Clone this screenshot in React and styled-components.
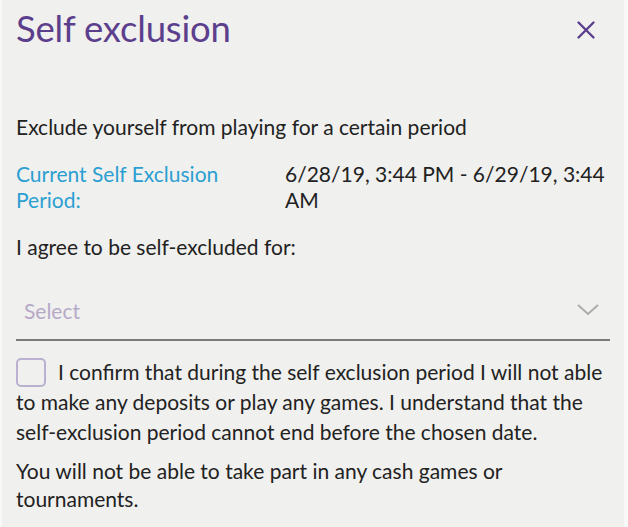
import styled, { createGlobalStyle } from "styled-components"

const Global = createGlobalStyle`
    body{
        margin: 0;
        background: #f0f0ee;
        font-family: "Lato", "Open Sans", sans-serif;
    }
`

export default function App(){
    return(
        <>
            <Global/>
            <Panel>
                <Header>
                    <Title>Self exclusion</Title>
                    <Close aria-label="close">
                        <svg width="20" height="20" viewBox="0 0 20 20">
                            <path d="M2.5 2.5 L17.5 17.5 M17.5 2.5 L2.5 17.5" stroke="#5c3f8c" strokeWidth="2.4" strokeLinecap="round"/>
                        </svg>
                    </Close>
                </Header>

                <Text $top={59}>Exclude yourself from playing for a certain period</Text>

                <Period>
                    <Label>Current Self Exclusion Period:</Label>
                    <Value>6/28/19, 3:44 PM - 6/29/19, 3:44 AM</Value>
                </Period>

                <Text $top={22}>I agree to be self-excluded for:</Text>

                <Select>
                    <span>Select</span>
                    <svg width="24" height="14" viewBox="0 0 24 14">
                        <path d="M2 2 L12 11 L22 2" fill="none" stroke="#ababab" strokeWidth="2"/>
                    </svg>
                </Select>

                <Confirm>
                    <Box/>
                    I confirm that during the self exclusion period I will not able to make any deposits or play any games. I understand that the self-exclusion period cannot end before the chosen date.
                </Confirm>

                <Text $top={10} $lh={28}>You will not be able to take part in any cash games or tournaments.</Text>
            </Panel>
        </>
    )
}

const Panel = styled.div`
    box-sizing: border-box;
    width: 628px;
    height: 527px;
    padding: 0 14px 0 14px;
    border-right: 4px solid #f8f8f8;
    border-left: 2px solid #f8f8f8;
    overflow: hidden;
    color: #222;
`

const Header = styled.header`
    display: flex;
    justify-content: space-between;
    align-items: center;
    height: 56px;
`

const Title = styled.h1`
    margin: 0;
    font-size: 36.5px;
    font-weight: 400;
    color: #5c3f8c;
    letter-spacing: -0.2px;
`

const Close = styled.button`
    border: none;
    background: none;
    padding: 0;
    margin-right: 14px;
    margin-top: 4px;
    display: flex;
`

const Text = styled.p`
    margin: ${p => p.$top}px 0 0;
    font-size: 21px;
    line-height: ${p => p.$lh || 24}px;
    max-width: 600px;
`

const Period = styled.div`
    display: grid;
    grid-template-columns: 269px 1fr;
    margin-top: 22px;
    font-size: 21px;
    line-height: 26px;
`

const Label = styled.div`
    color: #2b9fd2;
    width: 240px;
`

const Value = styled.div`
    width: 326px;
`

const Select = styled.div`
    box-sizing: border-box;
    display: flex;
    justify-content: space-between;
    align-items: center;
    height: 82px;
    padding: 22px 10px 0 8px;
    border-bottom: 2px solid #7a7a7a;
    font-size: 21px;
    color: #b6a9c8;
`

const Confirm = styled.p`
    margin: 16px 0 0;
    font-size: 21px;
    line-height: 30px;
`

const Box = styled.span`
    display: inline-block;
    vertical-align: middle;
    box-sizing: border-box;
    width: 30px;
    height: 29px;
    margin: -5px 12px 0 0;
    border: 2px solid #bab0d2;
    border-radius: 5px;
`
